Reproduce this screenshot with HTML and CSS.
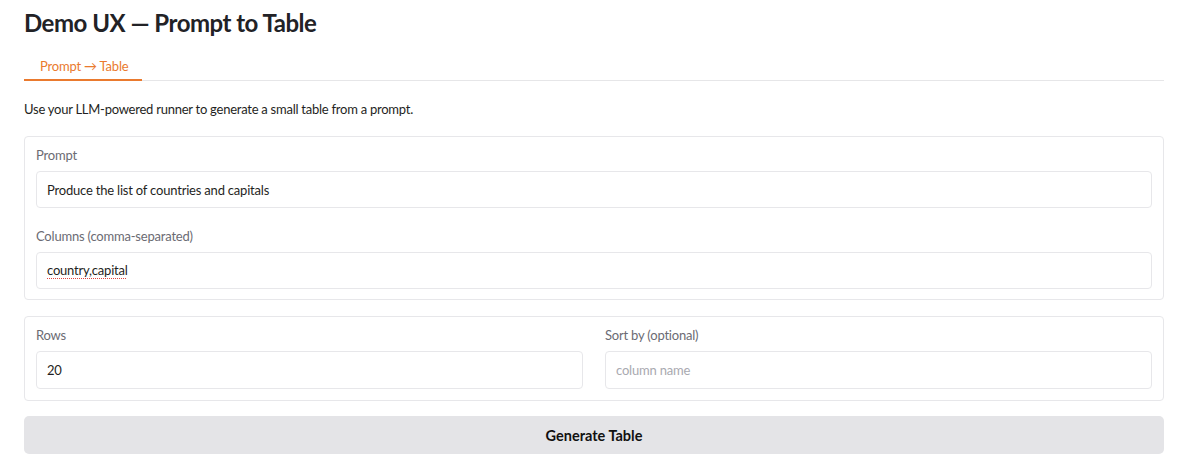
FILE: index.html
```html
<!DOCTYPE html>
<html lang="en">
<head>
    <meta charset="UTF-8">
    <meta name="viewport" content="width=device-width, initial-scale=1.0">
    <title>Demo UX - Prompt to Table</title>
    <link rel="stylesheet" href="styles.css">
</head>
<body>
    <div class="app">
        <h1 class="page-title">Demo UX — Prompt to Table</h1>

        <!-- Tabs -->
        <div class="tab-bar">
            <button class="tab tab-active">Prompt → Table</button>
        </div>

        <p class="intro">Use your LLM-powered runner to generate a small table from a prompt.</p>

        <!-- Prompt + columns -->
        <div class="block">
            <label class="field">
                <span class="field-label">Prompt</span>
                <input class="field-input" type="text" value="Produce the list of countries and capitals">
            </label>
            <div class="field">
                <span class="field-label">Columns (comma-separated)</span>
                <div class="field-input" contenteditable="true"><span class="misspelled">country,capital</span></div>
            </div>
        </div>

        <!-- Options -->
        <div class="block block-row">
            <label class="field">
                <span class="field-label">Rows</span>
                <input class="field-input" type="text" value="20">
            </label>
            <label class="field">
                <span class="field-label">Sort by (optional)</span>
                <input class="field-input" type="text" placeholder="column name">
            </label>
        </div>

        <button class="btn-generate">Generate Table</button>
    </div>
</body>
</html>
```

FILE: styles.css
```css
:root {
    --accent: #ea7a2e;
    --border: #e7e7ea;
    --text: #1f1f23;
    --muted: #6b6b73;
}

body {
    font-family: 'Lato', 'Open Sans', sans-serif;
    margin: 0;
    padding: 0 36px 0 24px;
    background: #ffffff;
    color: var(--text);
}

.app {
    max-width: 1140px;
}

.page-title {
    font-size: 24px;
    font-weight: 700;
    letter-spacing: -0.5px;
    margin: 0;
    padding-top: 8px;
    line-height: 30px;
    color: #222226;
}

.tab-bar {
    display: flex;
    margin-top: 20px;
    border-bottom: 1px solid #e6e6e8;
}

.tab {
    font-family: inherit;
    font-size: 13px;
    letter-spacing: -0.2px;
    white-space: nowrap;
    background: none;
    border: none;
    padding: 0 14px 5px 16px;
    margin-bottom: -1px;
    color: #555;
    cursor: pointer;
}

.tab-active {
    color: var(--accent);
    border-bottom: 2px solid var(--accent);
}

.intro {
    font-size: 13px;
    letter-spacing: -0.25px;
    margin: 18px 0 17px;
    line-height: 20px;
}

.block {
    border: 1px solid var(--border);
    border-radius: 4px;
    padding: 8px 11px 10px;
    margin-bottom: 16px;
}

.block-row {
    display: grid;
    grid-template-columns: 1fr 1fr;
    gap: 22px;
    padding-bottom: 11px;
    margin-bottom: 15px;
}

.field {
    display: block;
}

.field + .field {
    margin-top: 18px;
}

.block-row .field + .field {
    margin-top: 0;
}

.field-label {
    display: block;
    font-size: 13px;
    letter-spacing: -0.2px;
    line-height: 20px;
    color: var(--muted);
    margin-bottom: 6px;
}

.field-input {
    display: block;
    box-sizing: border-box;
    width: 100%;
    height: 37px;
    padding: 0 10px;
    font-family: inherit;
    font-size: 13px;
    line-height: 35px;
    letter-spacing: -0.2px;
    color: var(--text);
    border: 1px solid var(--border);
    border-radius: 4px;
    background: #fff;
    outline: none;
}

.block-row .field-input {
    height: 38px;
}

.field-input::placeholder {
    color: #a9a9b0;
}

.misspelled {
    text-decoration: underline dotted #e0463f;
    text-decoration-thickness: 1px;
    text-underline-offset: 3px;
}

.btn-generate {
    display: block;
    width: 100%;
    height: 38px;
    border: none;
    border-radius: 5px;
    background: #e4e4e7;
    font-family: inherit;
    font-size: 14.5px;
    font-weight: 700;
    color: #111;
    cursor: pointer;
}
```
